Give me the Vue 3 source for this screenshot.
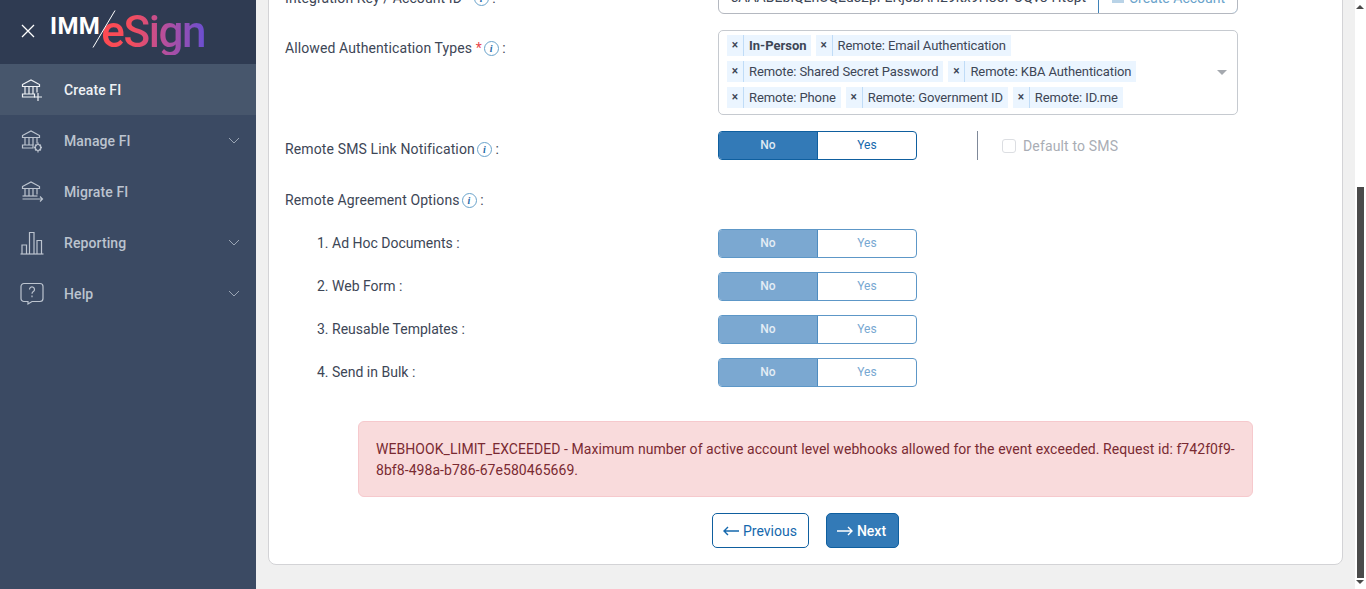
<template>
  <div class="page">
    <aside class="sidebar">
      <div class="brand">
        <svg class="close" viewBox="0 0 14 14"><path d="M1 1l12 12M13 1L1 13" /></svg>
        <span class="imm">IMM</span>
        <svg class="slash" viewBox="0 0 24 38"><path d="M23 0.5L1 37.5" /></svg>
        <span class="esign">eSign</span>
      </div>
      <nav>
        <a v-for="item in menu" :key="item.label" class="nav-item" :class="{ active: item.active }">
          <svg class="nav-icon" viewBox="0 0 24 24">
            <path v-for="d in item.icon" :key="d" :d="d" />
          </svg>
          <span class="nav-label">{{ item.label }}</span>
          <svg v-if="item.sub" class="chev" viewBox="0 0 12 7"><path d="M1 1l5 5 5-5" /></svg>
        </a>
      </nav>
    </aside>

    <main class="main">
      <section class="card">
        <div class="row">
          <label class="label first">Integration Key / Account ID <i class="req">*</i><span class="info">i</span> :</label>
          <div class="key-group">
            <div class="key-input">sAAABEbiQEhUQEus2pFEKjobAH29ltx9H8oPOQv8-Htept</div>
            <button class="key-btn">
              <svg class="key-ico" viewBox="0 0 14 12"><path d="M1 2h12v9H1z" /></svg>
              Create Account
            </button>
          </div>
        </div>

        <div class="row auth">
          <label class="label">Allowed Authentication Types <i class="req">*</i><span class="info">i</span> :</label>
          <div class="multi">
            <div class="tags">
              <span v-for="t in authTypes" :key="t.text" class="tag">
                <b class="tag-x">×</b>
                <span class="tag-text" :class="{ strong: t.strong }">{{ t.text }}</span>
              </span>
            </div>
            <span class="caret"></span>
          </div>
        </div>

        <div class="row sms">
          <label class="label wide">Remote SMS Link Notification<span class="info">i</span> :</label>
          <div class="controls">
            <div class="toggle">
              <span class="seg on">No</span>
              <span class="seg">Yes</span>
            </div>
            <span class="divider"></span>
            <span class="check"></span>
            <span class="check-text">Default to SMS</span>
          </div>
        </div>

        <div class="agreement">
          <label class="label">Remote Agreement Options<span class="info">i</span> :</label>
        </div>

        <div v-for="(opt, i) in options" :key="opt" class="row option">
          <label class="label flat sub">{{ i + 1 }}. {{ opt }} :</label>
          <div class="toggle off">
            <span class="seg on">No</span>
            <span class="seg">Yes</span>
          </div>
        </div>

        <div class="alert">
          WEBHOOK_LIMIT_EXCEEDED - Maximum number of active account level webhooks allowed for the event exceeded. Request id: f742f0f9-8bf8-498a-b786-67e580465669.
        </div>

        <div class="actions">
          <button class="btn outline">
            <svg viewBox="0 0 16 10"><path d="M16 5H1M5 1L1 5l4 4" /></svg>
            Previous
          </button>
          <button class="btn solid">
            <svg viewBox="0 0 16 10"><path d="M0 5h15M11 1l4 4-4 4" /></svg>
            Next
          </button>
        </div>
      </section>
    </main>

    <div class="scrollbar">
      <span class="arrow up"></span>
      <span class="thumb"></span>
      <span class="arrow down"></span>
    </div>
  </div>
</template>

<script setup>
const roof = 'M2.500 6.500L11 2l8.500 4.500V8.500H2.500z'
const columns = 'M5 8.500v7.500M9 8.500v7.500M13 8.500v7.500M17 8.500v6'

const menu = [
  { label: 'Create FI', active: true, icon: [roof, columns, 'M2.500 16h12v3h-12z', 'M18 15v8M14 19h8'] },
  {
    label: 'Manage FI',
    sub: true,
    icon: [
      roof,
      columns,
      'M2.500 16h10.500v3H2.500z',
      'M18 15.500a3 3 0 1 0 0 6a3 3 0 1 0 0-6z',
      'M18 13.500v2M18 21.500v2M14 18.500h2M20 18.500h2M15.200 15.700l1.400 1.400M19.400 19.900l1.400 1.400M20.800 15.700l-1.400 1.400M16.600 19.900l-1.400 1.400'
    ]
  },
  { label: 'Migrate FI', icon: [roof, columns, 'M2.500 16h15', 'M2.500 19h20M20 16.500l2.500 2.500-2.500 2.500'] },
  {
    label: 'Reporting',
    sub: true,
    icon: ['M0.500 23h23', 'M2 23v-9h4.500v9', 'M9.500 23V1.500h4.500V23', 'M17 23V9.500h4.500V23']
  },
  {
    label: 'Help',
    sub: true,
    icon: [
      'M4 1.500h16a3 3 0 0 1 3 3v12a3 3 0 0 1-3 3h-8l-4 2.500v-2.500H4a3 3 0 0 1-3-3v-12a3 3 0 0 1 3-3z',
      'M9.500 7.500a2.500 2.500 0 1 1 3.800 2.100c-.9.600-1.300 1.100-1.300 2.200',
      'M12 13.500v1.800'
    ]
  }
]

const authTypes = [
  { text: 'In-Person', strong: true },
  { text: 'Remote: Email Authentication' },
  { text: 'Remote: Shared Secret Password' },
  { text: 'Remote: KBA Authentication' },
  { text: 'Remote: Phone' },
  { text: 'Remote: Government ID' },
  { text: 'Remote: ID.me' }
]

const options = ['Ad Hoc Documents', 'Web Form', 'Reusable Templates', 'Send in Bulk']
</script>

<style>
html, body {
  margin: 0;
  height: 100%;
  overflow: hidden;
}
</style>

<style scoped>
.page {
  display: flex;
  height: 589px;
  background: #f0f0f0;
  font-family: Roboto, "Liberation Sans", sans-serif;
  font-size: 14px;
  color: #3d4656;
  overflow: hidden;
}

.sidebar {
  width: 256px;
  flex: none;
  background: #3b4a63;
}

.brand {
  display: flex;
  align-items: flex-start;
  height: 64px;
  background: #2f3b52;
  position: relative;
}

.close {
  width: 14px;
  height: 14px;
  margin: 24px 0 0 21px;
  fill: none;
  stroke: #fff;
  stroke-width: 1.3;
}

.imm {
  margin: 12px 0 0 15px;
  font-size: 24px;
  line-height: 28px;
  font-weight: 700;
  color: #fff;
  letter-spacing: 0.4px;
}

.slash {
  position: absolute;
  left: 92px;
  top: 10px;
  width: 24px;
  height: 38px;
  fill: none;
  stroke: #fff;
  stroke-width: 1;
}

.esign {
  margin: 9px 0 0 1px;
  font-size: 44px;
  line-height: 46px;
  font-weight: 500;
  letter-spacing: -1.4px;
  background: linear-gradient(90deg, #ff4a50 0%, #f24d5e 30%, #b94f9b 60%, #6a4fd0 100%);
  -webkit-background-clip: text;
  background-clip: text;
  color: transparent;
}

.nav-item {
  display: flex;
  align-items: center;
  height: 51px;
  color: #bcc4cf;
  font-weight: 500;
}

.nav-item.active {
  background: #47566c;
  color: #eef1f4;
}

.nav-icon {
  width: 24px;
  height: 24px;
  margin-left: 20px;
  fill: none;
  stroke: currentColor;
  stroke-width: 1.2;
}

.nav-label {
  margin-left: 20px;
  flex: 1;
  letter-spacing: 0.1px;
}

.chev {
  width: 12px;
  height: 7px;
  margin-right: 16px;
  fill: none;
  stroke: #9aa5b4;
  stroke-width: 1;
}

.main {
  flex: 1;
  min-width: 0;
  padding: 0 12px;
}

.card {
  margin-top: -40px;
  padding: 17px 16px 16px;
  height: 605px;
  box-sizing: border-box;
  background: #fff;
  border: 1px solid #d3d3d6;
  border-radius: 8px;
}

.row {
  display: flex;
  align-items: flex-start;
}

.label {
  display: block;
  width: 433px;
  flex: none;
  padding-top: 8px;
  line-height: 20px;
  letter-spacing: 0.1px;
}

.label.first {
  padding-top: 10px;
}

.label.wide {
  letter-spacing: 0.13px;
}

.label.flat {
  letter-spacing: 0;
}

.req {
  color: #e8474c;
  font-style: normal;
}

.info {
  display: inline-block;
  width: 13px;
  height: 13px;
  margin-left: 2px;
  border: 1px solid #6aa3cb;
  border-radius: 50%;
  font: italic 700 10px/13px "Liberation Serif", serif;
  text-align: center;
  color: #1f6aa8;
  vertical-align: 1px;
}

.key-group {
  display: flex;
  width: 520px;
  height: 36px;
  box-sizing: border-box;
  border: 1px solid #b4b8c0;
  border-radius: 6px;
  overflow: hidden;
}

.key-input {
  flex: 1;
  min-width: 0;
  padding: 0 12px;
  line-height: 37px;
  letter-spacing: 0.04px;
  white-space: nowrap;
  overflow: hidden;
}

.key-btn {
  display: flex;
  align-items: center;
  gap: 4px;
  width: 140px;
  flex: none;
  padding: 3px 0 0 12px;
  margin: -1px -1px -1px 0;
  border: 1px solid #3f82b8;
  border-radius: 0 6px 6px 0;
  background: #fff;
  font: inherit;
  color: #6aa3cb;
}

.key-ico {
  width: 14px;
  height: 12px;
  fill: #b9d3e7;
}

.auth {
  margin-top: 16px;
}

.multi {
  display: flex;
  align-items: center;
  width: 520px;
  height: 85px;
  box-sizing: border-box;
  padding: 4px 5px 7px 8px;
  border: 1px solid #c6cad0;
  border-radius: 5px;
}

.tags {
  flex: 1;
  display: flex;
  flex-wrap: wrap;
  gap: 5px;
  align-content: flex-start;
  padding-right: 60px;
}

.tag {
  display: flex;
  height: 21px;
  line-height: 21px;
  font-size: 13px;
  background: #ebf5ff;
  color: #3d4656;
}

.tag-x {
  width: 16px;
  text-align: center;
  font-weight: 500;
  font-size: 12px;
  border-right: 1px solid #c0dcf7;
}

.tag-text {
  padding: 0 5px;
  letter-spacing: -0.1px;
}

.tag-text.strong {
  font-weight: 700;
  letter-spacing: 0;
  padding-right: 4px;
}

.caret {
  width: 0;
  height: 0;
  margin: 2px 5px 0 0;
  border: 5px solid transparent;
  border-top: 5px solid #a5a9af;
  border-bottom: 0;
}

.sms {
  margin-top: 16px;
}

.controls {
  display: flex;
  align-items: center;
}

.toggle {
  display: flex;
  width: 199px;
  height: 29px;
  box-sizing: border-box;
  border: 1px solid #0f5f9f;
  border-radius: 4px;
  overflow: hidden;
  font-size: 12px;
  line-height: 26px;
  text-align: center;
  color: #1568ad;
  background: #fff;
}

.seg {
  flex: 1;
}

.seg.on {
  background: #337ab7;
  color: #dfe9f3;
  font-weight: 500;
  border-right: 1px solid #0f5f9f;
}

.toggle.off {
  border-color: #5d97c7;
  color: #78a8d2;
}

.toggle.off .seg.on {
  background: #7ba8d1;
  color: #e4edf5;
  border-right-color: #4e8cc0;
}

.divider {
  width: 1px;
  height: 29px;
  margin-left: 60px;
  background: #7f8999;
}

.check {
  width: 12px;
  height: 12px;
  margin-left: 24px;
  border: 1px solid #dcdee2;
  border-radius: 3px;
}

.check-text {
  margin-left: 7px;
  color: #a9adb5;
  letter-spacing: 0.15px;
}

.agreement {
  margin-top: 22px;
}

.option {
  align-items: center;
  margin-top: 14px;
}

.agreement + .option {
  margin-top: 19px;
}

.option .label {
  padding: 0 0 2px 32px;
  box-sizing: border-box;
}

.alert {
  width: 895px;
  margin: 34px 0 0 73px;
  padding: 17px 16px 15px 17px;
  box-sizing: border-box;
  background: #f9dbdc;
  border: 1px solid #f6c9cd;
  border-radius: 6px;
  color: #7a2a32;
  line-height: 21px;
  letter-spacing: 0.06px;
}

.actions {
  display: flex;
  gap: 17px;
  margin: 16px 0 0 427px;
}

.btn {
  display: flex;
  align-items: center;
  gap: 4px;
  height: 35px;
  box-sizing: border-box;
  padding: 0 11px 0 10px;
  border: 1px solid #0f5f9f;
  border-radius: 5px;
  font: 500 14px Roboto, sans-serif;
}

.btn svg {
  width: 16px;
  height: 10px;
  fill: none;
  stroke: currentColor;
  stroke-width: 1.4;
}

.btn.outline {
  background: #fff;
  color: #1568ad;
  font-weight: 400;
}

.btn.solid {
  padding-right: 12px;
  background: #337ab7;
  color: #fff;
}

.scrollbar {
  width: 11px;
  flex: none;
  background: #fff;
  position: relative;
}

.thumb {
  position: absolute;
  top: 187px;
  left: 2px;
  width: 7px;
  height: 391px;
  background: #4a4a4a;
}

.arrow {
  position: absolute;
  left: 1px;
  border: 4px solid transparent;
  width: 0;
  height: 0;
}

.arrow.up {
  top: 1px;
  border-bottom-color: #4a4a4a;
}

.arrow.down {
  bottom: 1px;
  border-top-color: #4a4a4a;
}
</style>
